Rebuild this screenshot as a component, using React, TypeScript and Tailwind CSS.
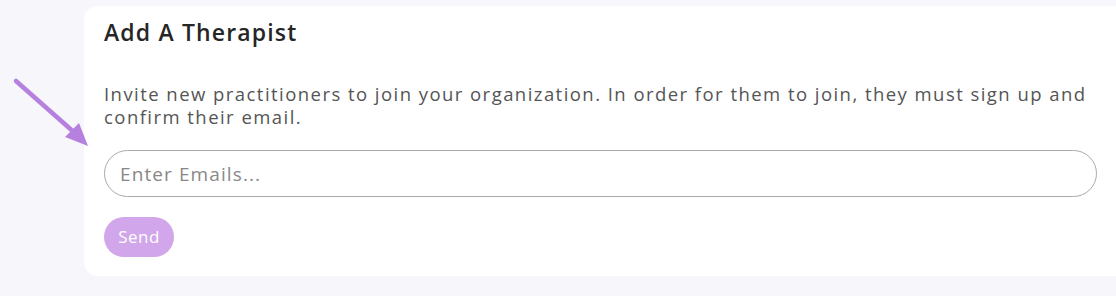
import React from "react";

export default function App() {
  return (
    <div className="relative w-[1116px] h-[296px] bg-[#f7f7fb] overflow-hidden">
      <div className="absolute left-0 top-0 pointer-events-none">
        <svg width="100" height="160" viewBox="0 0 100 160">
          <line x1="16" y1="81" x2="76" y2="134" stroke="#b680df" strokeWidth="4.5" strokeLinecap="round" />
          <polygon points="65,137 79,123 88,146" fill="#b680df" />
        </svg>
      </div>
      <div className="pt-[6px] pl-[84px]">
        <div className="bg-white rounded-l-[14px] h-[270px] pl-[20px] pr-[19px] pt-[11px]">
          <h2 className="text-[23px] leading-[30px] font-semibold text-[#262626] font-['Open_Sans','Noto_Sans',sans-serif] tracking-[1.15px]">
            Add A Therapist
          </h2>
          <p className="mt-[35px] text-[18.5px] leading-[23px] text-[#555] font-['Open_Sans','Noto_Sans',sans-serif] tracking-[1.45px] w-[995px]">
            Invite new practitioners to join your organization. In order for them to join, they must sign up and confirm their email.
          </p>
          <input
            className="mt-[22px] block w-[993px] h-[47px] rounded-full border border-[#aaa] px-[15px] text-[19px] tracking-[1.1px] text-[#333] placeholder:text-[#888] outline-none font-['Open_Sans','Noto_Sans',sans-serif]"
            placeholder="Enter Emails..."
          />
          <button className="mt-[20px] block w-[70px] h-[40px] rounded-full bg-[#d1a6ea] text-white text-[17px] tracking-[0.5px] font-medium font-['Open_Sans','Noto_Sans',sans-serif]">
            Send
          </button>
        </div>
      </div>
    </div>
  );
}
